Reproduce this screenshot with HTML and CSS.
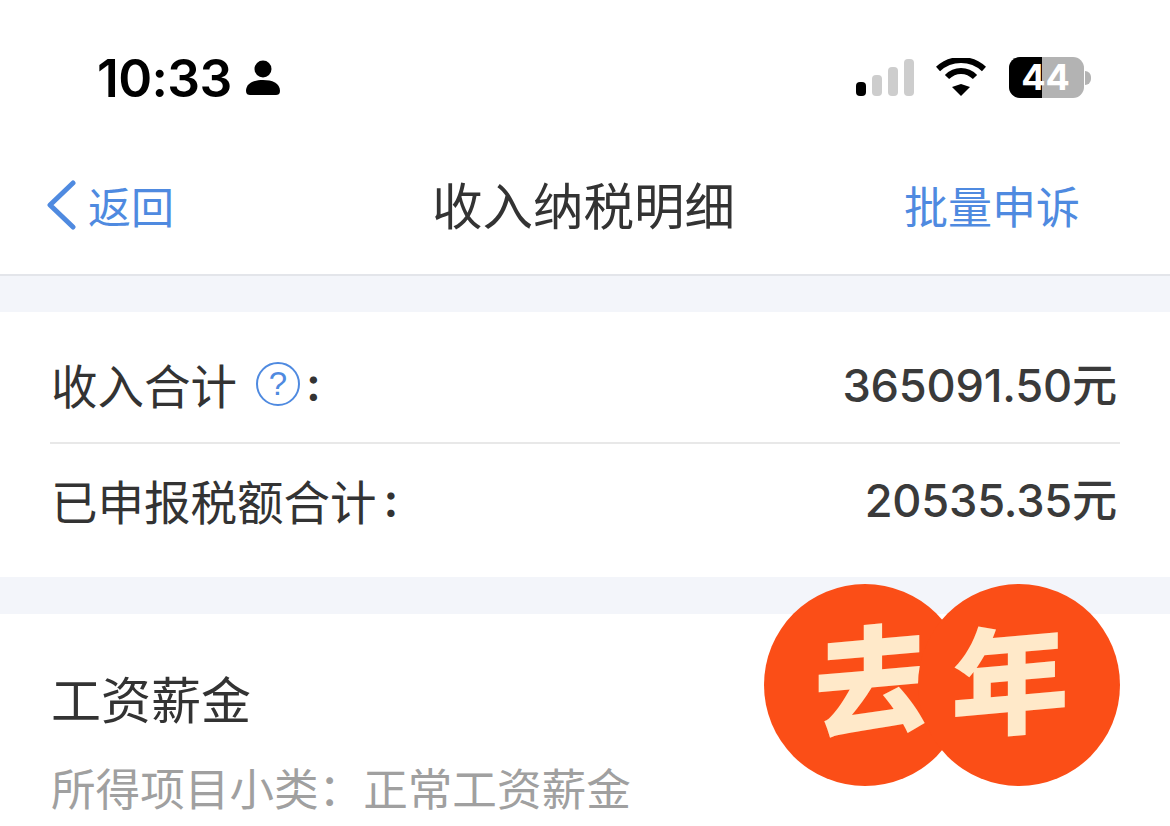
FILE: index.html
```html
<!DOCTYPE html>
<html lang="zh-CN">
  <head>
    <meta charset="utf-8">
    <title>收入纳税明细</title>
    <link rel="stylesheet" href="styles.css">
  </head>
  <body>
    <div class="page">
      <!-- status bar -->
      <div class="status">
        <div class="status-left">
          <span class="time">10:33</span>
          <svg class="person" width="34" height="36" viewBox="0 0 34 36">
            <circle cx="17" cy="9" r="8.5" fill="#000"/>
            <path d="M0 31C0 23 8 20 17 20s17 3 17 11c0 3-2 4-4 4H4c-2 0-4-1-4-4z" fill="#000"/>
          </svg>
        </div>
        <div class="status-right">
          <div class="signal">
            <span class="bar bar1"></span>
            <span class="bar bar2"></span>
            <span class="bar bar3"></span>
            <span class="bar bar4"></span>
          </div>
          <svg class="wifi" width="50" height="38" viewBox="0 0 50 38">
            <path d="M25 26l9 3-9 9-9-9z" fill="#000"/>
            <path d="M11 19C19 11 31 11 39 19" fill="none" stroke="#000" stroke-width="6"/>
            <path d="M2 11C15-1 35-1 48 11" fill="none" stroke="#000" stroke-width="6"/>
          </svg>
          <div class="battery">
            <div class="battery-body">
              <span class="battery-fill"></span>
              <span class="battery-num">44</span>
            </div>
            <span class="battery-tip"></span>
          </div>
        </div>
      </div>

      <!-- nav -->
      <div class="nav">
        <div class="nav-back">
          <svg width="32" height="50" viewBox="0 0 32 50">
            <path d="M27 3L4 25l23 22" fill="none" stroke="#4f8ae0" stroke-width="5" stroke-linecap="round" stroke-linejoin="round"/>
          </svg>
          <span>返回</span>
        </div>
        <div class="nav-title">收入纳税明细</div>
        <div class="nav-action">批量申诉</div>
      </div>

      <div class="gap gap-top"></div>

      <div class="summary">
        <div class="row row-first">
          <div class="row-label">
            收入合计
            <span class="help">?</span>
            <span class="colon">:</span>
          </div>
          <div class="row-value">365091.50元</div>
        </div>
        <div class="row row-second">
          <div class="row-label">
            已申报税额合计
            <span class="colon colon-tight">:</span>
          </div>
          <div class="row-value">20535.35元</div>
        </div>
      </div>

      <div class="gap"></div>

      <div class="item">
        <div class="item-title">工资薪金</div>
        <div class="item-sub">所得项目小类：正常工资薪金</div>
      </div>

      <!-- sticker over the page -->
      <div class="badge">
        <div class="badge-circle badge-left"><span class="badge-char">去</span></div>
        <div class="badge-circle badge-right"><span class="badge-char">年</span></div>
      </div>
    </div>
  </body>
</html>
```

FILE: styles.css
```css
* { box-sizing: border-box; }

html, body { margin: 0; padding: 0; }

body {
  background: #fff;
  font-family: "Noto Sans CJK SC", "Noto Sans", sans-serif;
  color: #333;
}

.page {
  position: relative;
  width: 1170px;
  height: 826px;
  overflow: hidden;
}

/* status bar */
.status {
  height: 160px;
  display: flex;
  justify-content: space-between;
  padding: 50px 79px 0 97px;
}

.status-left {
  display: flex;
  align-items: flex-start;
  gap: 14px;
}

.time {
  font-family: Inter, sans-serif;
  font-size: 51.5px;
  font-weight: 600;
  line-height: 56px;
  color: #000;
  letter-spacing: -0.6px;
}

.person { margin-top: 10px; }

.status-right {
  display: flex;
  align-items: flex-start;
}

.signal {
  display: flex;
  align-items: flex-end;
  gap: 6px;
  height: 37px;
  margin-top: 9px;
}

.bar {
  width: 10px;
  border-radius: 4px;
  background: #cdcdcd;
}

.bar1 { height: 14px; background: #000; }
.bar2 { height: 21px; }
.bar3 { height: 29px; }
.bar4 { height: 37px; }

.wifi { margin: 8px 0 0 22px; }

.battery {
  display: flex;
  align-items: center;
  height: 41px;
  margin: 7px 0 0 23px;
}

.battery-body {
  position: relative;
  width: 75px;
  height: 41px;
  border-radius: 11px;
  background: #b3b3b3;
}

.battery-fill {
  position: absolute;
  left: 0;
  top: 0;
  bottom: 0;
  width: 33px;
  border-radius: 11px 0 0 11px;
  background: #000;
}

.battery-num {
  position: absolute;
  left: -1px;
  right: 1px;
  top: 0;
  text-align: center;
  font-family: Inter, sans-serif;
  font-size: 36px;
  font-weight: 700;
  line-height: 41px;
  color: #fff;
}

.battery-tip {
  width: 6px;
  height: 14px;
  margin-left: 1px;
  border-radius: 0 7px 7px 0;
  background: #b3b3b3;
}

/* nav */
.nav {
  position: relative;
  height: 116px;
  display: flex;
  align-items: center;
  justify-content: space-between;
  padding: 0 90px 24px 46px;
  border-bottom: 2px solid #e3e5ea;
}

.nav-back {
  display: flex;
  align-items: center;
  gap: 10px;
  font-size: 43px;
  line-height: 50px;
  color: #4f8ae0;
}

.nav-title {
  position: absolute;
  left: 432px;
  top: 13px;
  font-size: 50.5px;
  line-height: 60px;
}

.nav-action {
  font-size: 44px;
  line-height: 50px;
  color: #4f8ae0;
}

.gap {
  height: 37px;
  background: #f3f5fa;
}

.gap-top { height: 36px; }

/* summary */
.summary { padding: 0 50px; }

.row {
  display: flex;
  align-items: center;
  justify-content: space-between;
  padding: 0 3px 0 1px;
}

.row-first {
  height: 132px;
  padding-top: 14px;
  border-bottom: 2px solid #e8e8e8;
}

.row-second {
  height: 133px;
  padding-bottom: 22px;
}

.row-label {
  display: flex;
  align-items: center;
  font-size: 46.5px;
  line-height: 60px;
}

.help {
  width: 44px;
  height: 44px;
  margin-left: 19px;
  border: 2px solid #4f8ae0;
  border-radius: 50%;
  font-family: "Liberation Sans", sans-serif;
  font-size: 33px;
  line-height: 40px;
  text-align: center;
  color: #4f8ae0;
}

.colon {
  margin-left: 6px;
  font-family: Inter, sans-serif;
  font-weight: 600;
}

.colon-tight { margin-left: 7px; }

.row-value {
  margin-top: 3px;
  font-family: Inter, "Noto Sans CJK SC", sans-serif;
  font-size: 45.2px;
  font-weight: 500;
  line-height: 60px;
  letter-spacing: -0.2px;
  color: #3a3a3a;
}

/* first item */
.item { padding: 50px 51px 0; }

.item-title {
  font-size: 50px;
  line-height: 66px;
}

.item-sub {
  margin-top: 27px;
  font-size: 44.6px;
  line-height: 60px;
  color: #a0a0a0;
}

/* sticker */
.badge {
  position: absolute;
  left: 764px;
  top: 584px;
  width: 356px;
  height: 202px;
}

.badge-circle {
  position: absolute;
  top: 0;
  width: 202px;
  height: 202px;
  border-radius: 50%;
  background: #fb4e17;
  text-align: center;
  font-size: 118px;
  font-weight: 900;
  line-height: 180px;
  color: #ffe9c9;
}

.badge-left { left: 0; padding-left: 16px; }
.badge-right { right: 0; padding-right: 18px; }

.badge-char {
  display: inline-block;
  transform: skewY(-5deg);
}
```
